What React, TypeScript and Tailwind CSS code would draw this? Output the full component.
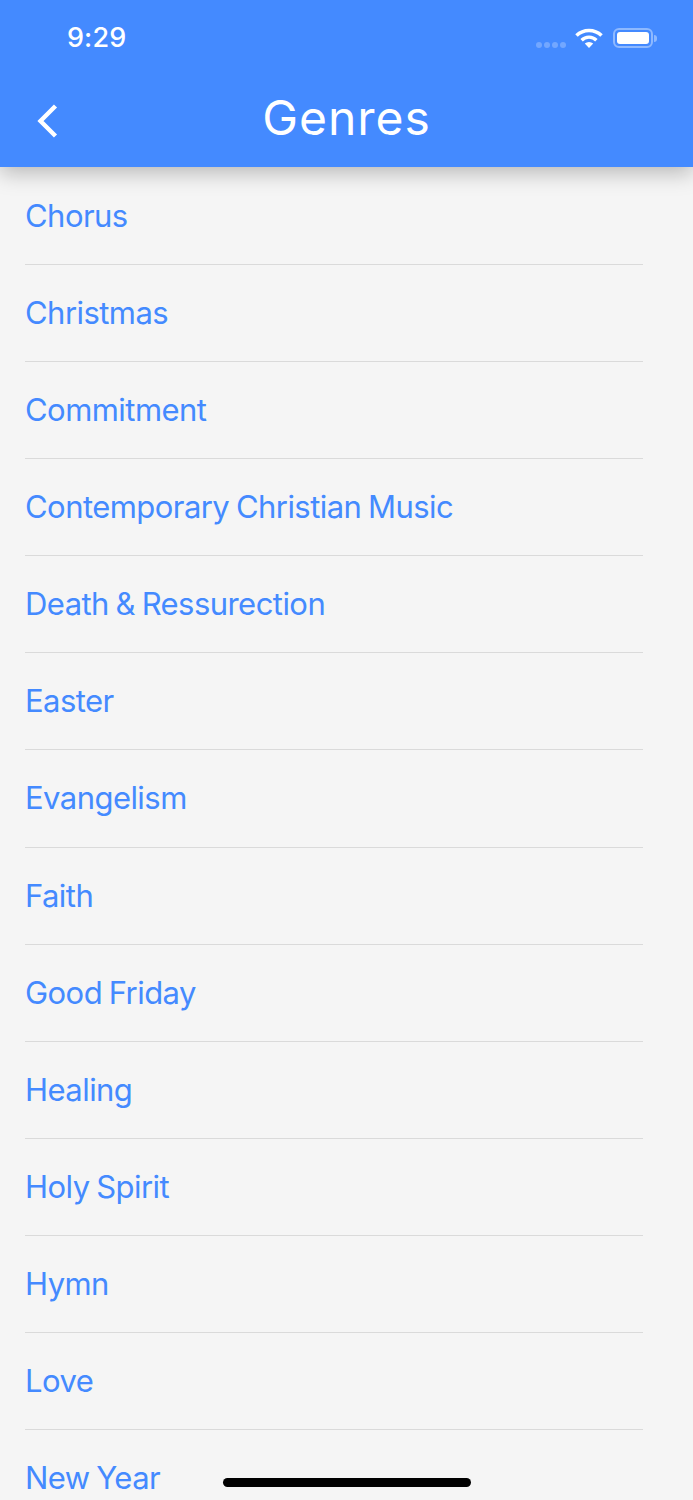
import React from 'react';

const genres = [
  'Chorus',
  'Christmas',
  'Commitment',
  'Contemporary Christian Music',
  'Death & Ressurection',
  'Easter',
  'Evangelism',
  'Faith',
  'Good Friday',
  'Healing',
  'Holy Spirit',
  'Hymn',
  'Love',
  'New Year',
];

const StatusIcons = () => (
  <div className="flex items-center">
    {/* signal dots */}
    <div className="flex gap-[2px] mt-[14px] mr-[9px]">
      <span className="w-[6px] h-[6px] rounded-full bg-white/25"></span>
      <span className="w-[6px] h-[6px] rounded-full bg-white/25"></span>
      <span className="w-[6px] h-[6px] rounded-full bg-white/25"></span>
      <span className="w-[6px] h-[6px] rounded-full bg-white/25"></span>
    </div>
    <svg width="28" height="20" viewBox="0 0 28 20" className="mr-[10px]">
      <path d="M1.5 7.5 A18 18 0 0 1 26.5 7.5" fill="none" stroke="white" strokeWidth="3.6" />
      <path d="M6.6 12.2 A10.5 10.5 0 0 1 21.4 12.2" fill="none" stroke="white" strokeWidth="3.4" />
      <path d="M9.8 15.6 L14 20 L18.2 15.6 A6 6 0 0 0 9.8 15.6 Z" fill="white" />
    </svg>
    <div className="w-[40px] h-[20px] rounded-[6px] border-[2px] border-white/40 p-[2px]">
      <div className="w-full h-full rounded-[3px] bg-white"></div>
    </div>
    <div className="w-[3px] h-[7px] rounded-r-full bg-white/40 ml-[1px]"></div>
  </div>
);

export default function App() {
  return (
    <div className="relative h-[1500px] overflow-hidden bg-[#f5f5f5] font-['Inter','Liberation_Sans',sans-serif]">
      {/* Header */}
      <header className="relative z-10 h-[167px] bg-[#448aff] shadow-[0_6px_20px_rgba(0,0,0,0.25)] text-white">
        <div className="flex items-center justify-between h-[76px] pl-[67px] pr-[36px]">
          <span className="text-[27px] font-medium tracking-[0.1px] mt-[1px]">9:29</span>
          <StatusIcons />
        </div>
        <div className="relative flex items-center justify-center h-[80px]">
          <svg width="24" height="36" viewBox="0 0 24 36" className="absolute left-[35px] top-[27px]">
            <path d="M20.5 3 L5.5 18 L20.5 33" fill="none" stroke="white" strokeWidth="4.4" />
          </svg>
          <h1 className="text-[48px] font-normal mt-[4px] tracking-[1px]">Genres</h1>
        </div>
      </header>

      {/* List */}
      <ul className="pt-[1px] pl-[25px] pr-[50px]">
        {genres.map((genre) => (
          <li
            key={genre}
            className="h-[97.08px] pt-[29px] border-b border-[#dadada] text-[31px] leading-[38px] text-[#448aff] tracking-[-0.55px] [word-spacing:-1.5px]"
          >
            {genre}
          </li>
        ))}
      </ul>

      {/* Home indicator */}
      <div className="absolute left-[223px] top-[1478px] w-[248px] h-[9px] rounded-full bg-black"></div>
    </div>
  );
}
